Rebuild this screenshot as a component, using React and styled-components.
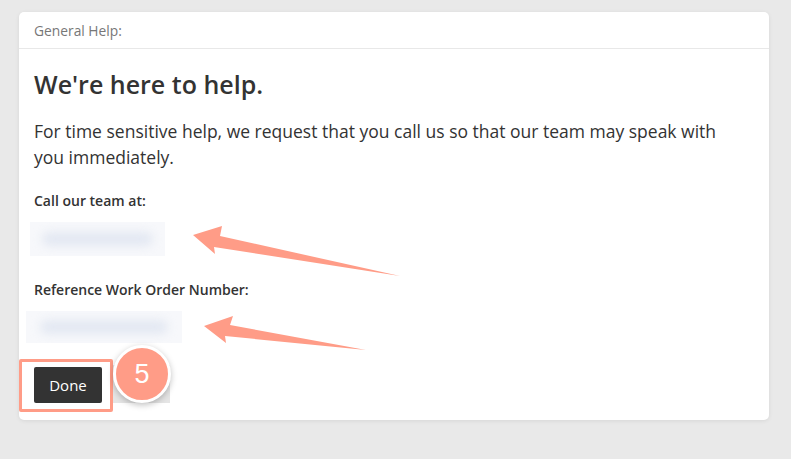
import React from 'react';
import styled, { createGlobalStyle } from 'styled-components';

const GlobalStyle = createGlobalStyle`
  html, body {
    margin: 0;
    padding: 0;
    background: #e9e9e9;
    font-family: "Open Sans", "Noto Sans", sans-serif;
  }
`;

export default function App() {
  return (
    <Page>
      <GlobalStyle />
      <Card>
        <Header>General Help:</Header>
        <Body>
          <Title>We're here to help.</Title>
          <Text>
            For time sensitive help, we request that you call us so that our team may speak with
            you immediately.
          </Text>
          <Label>Call our team at:</Label>
          <Blurred $w={135} $h={34} $offset={-4}><Smudge /></Blurred>
          <Label $top={24}>Reference Work Order Number:</Label>
          <Blurred $w={156} $h={32} $offset={-8}><Smudge /></Blurred>
          <Footer>
            <Highlight>
              <DoneButton>Done</DoneButton>
            </Highlight>
            <Shade />
            <Step>5</Step>
          </Footer>
        </Body>
        <Arrows width="791" height="459" viewBox="0 0 791 459">
          <polygon points="193,235 222,226 220,236 400,276 214,247 215,254" fill="#ff9c87" />
          <polygon points="204,326 233,316 230,325 366,350 225,336 226,343" fill="#ff9c87" />
        </Arrows>
      </Card>
    </Page>
  );
}

const Page = styled.div`
  width: 791px;
  height: 459px;
  padding: 12px 22px 0 19px;
  box-sizing: border-box;
`;

const Card = styled.div`
  width: 750px;
  height: 408px;
  background: #fff;
  border-radius: 5px;
  box-shadow: 0 1px 4px rgba(0, 0, 0, 0.08);
  display: flex;
  flex-direction: column;
`;

const Header = styled.div`
  height: 37px;
  box-sizing: border-box;
  border-bottom: 1px solid #e8e8e8;
  padding: 9px 15px 0;
  font-size: 13.8px;
  color: #777;
`;

const Body = styled.div`
  padding: 18px 15px 0;
  display: flex;
  flex-direction: column;
  align-items: flex-start;
`;

const Title = styled.h1`
  margin: 0;
  font-size: 25px;
  font-weight: 600;
  color: #333;
  line-height: 34px;
`;

const Text = styled.p`
  margin: 17px 0 0;
  width: 700px;
  font-size: 17.5px;
  line-height: 26px;
  color: #333;
`;

const Label = styled.div`
  margin-top: ${(p) => p.$top || 21}px;
  font-size: 14px;
  font-weight: 600;
  color: #333;
  line-height: 20px;
`;

const Blurred = styled.div`
  margin: 11px 0 0 ${(p) => p.$offset}px;
  width: ${(p) => p.$w}px;
  height: ${(p) => p.$h}px;
  background: #f7f8fb;
  overflow: hidden;
  display: flex;
  align-items: center;
  justify-content: center;
`;

const Smudge = styled.div`
  width: 82%;
  height: 14px;
  border-radius: 7px;
  background: #e3e8f2;
  filter: blur(5px);
`;

const Footer = styled.div`
  position: relative;
  margin: 16px 0 0 -15px;
  display: flex;
  align-items: flex-start;
`;

const Highlight = styled.div`
  padding: 5px 8px 6px 12px;
  border: 3px solid #ff9c87;
  border-radius: 2px;
`;

const DoneButton = styled.button`
  width: 68px;
  height: 36px;
  border: none;
  border-radius: 2px;
  background: #333;
  color: #fff;
  font-family: inherit;
  font-size: 15px;
  cursor: pointer;
`;

const Shade = styled.div`
  margin-top: 6px;
  width: 57px;
  height: 38px;
  background: #e5e5e5;
`;

const Step = styled.div`
  position: absolute;
  left: 94px;
  top: -14px;
  width: 52px;
  height: 52px;
  border-radius: 50%;
  background: #ff9c87;
  border: 3px solid #fff;
  box-shadow: 0 2px 6px rgba(0, 0, 0, 0.25);
  color: #fff;
  font-size: 27px;
  font-family: "Liberation Sans", sans-serif;
  display: flex;
  align-items: center;
  justify-content: center;
`;

const Arrows = styled.svg`
  position: absolute;
  left: 0;
  top: 0;
  pointer-events: none;
`;
